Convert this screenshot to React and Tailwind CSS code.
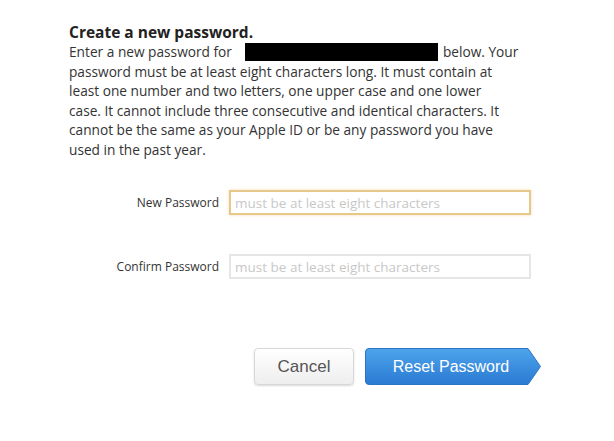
import React from 'react';

const font = { fontFamily: '"Open Sans", "Noto Sans", sans-serif' };

const Field = ({ label, focused }) => (
  <div className="flex items-center">
    <label className="w-[229px] pr-[10px] text-right text-[12px] text-[#333]">{label}</label>
    <input
      type="password"
      placeholder="must be at least eight characters"
      className={
        'h-[25px] w-[302px] px-[4px] text-[13.5px] text-[#333] placeholder:text-[#c8c8c8] outline-none ' +
        (focused
          ? 'border-2 border-[#e6c98a] shadow-[0_0_3px_#f3dcb0]'
          : 'border-2 border-[#e6e6e6]')
      }
    />
  </div>
);

export default function App() {
  return (
    <div className="min-h-[441px] w-[614px] bg-white pl-[69px] pt-[23px] text-[#333]" style={font}>
      <h1 className="text-[15.5px] font-bold leading-[19px] text-[#222]">Create a new password.</h1>
      <div className="text-[13.7px] leading-[19.5px]">
        <div className="flex items-center">
          Enter a new password for
          <span className="ml-[13px] mr-[5px] inline-block h-[18px] w-[193px] bg-black" />
          below. Your
        </div>
        <div>password must be at least eight characters long. It must contain at</div>
        <div>least one number and two letters, one upper case and one lower</div>
        <div>case. It cannot include three consecutive and identical characters. It</div>
        <div>cannot be the same as your Apple ID or be any password you have</div>
        <div>used in the past year.</div>
      </div>

      <div className="-ml-[69px] mt-[31px] flex flex-col gap-[39px]">
        <Field label="New Password" focused />
        <Field label="Confirm Password" />
      </div>

      <div className="-ml-[69px] mt-[69px] flex items-center pl-[254px]">
        <button
          className="h-[37px] w-[100px] rounded-[4px] border border-[#d8d8d8] bg-gradient-to-b from-white to-[#eeeeee] text-[17px] text-[#555] shadow-[0_1px_2px_rgba(0,0,0,0.15)]"
          style={{ fontFamily: '"Liberation Sans", Arial, sans-serif' }}
        >
          Cancel
        </button>
        <button
          className="relative ml-[11px] flex h-[37px] w-[176px] items-center justify-center pr-[4px] text-[16px] text-white"
          style={{ fontFamily: '"Liberation Sans", Arial, sans-serif' }}
        >
          <svg className="absolute inset-0" width="176" height="37" viewBox="0 0 176 37">
            <defs>
              <linearGradient id="rp" x1="0" y1="0" x2="0" y2="1">
                <stop offset="0" stopColor="#4ea4ec" />
                <stop offset="1" stopColor="#2a7ad2" />
              </linearGradient>
            </defs>
            <path d="M4 0.5 H163 L175.5 18.5 L163 36.5 H4 Q0.5 36.5 0.5 33 V4 Q0.5 0.5 4 0.5 Z" fill="url(#rp)" stroke="#2b74c6" />
          </svg>
          <span className="relative">Reset Password</span>
        </button>
      </div>
    </div>
  );
}
